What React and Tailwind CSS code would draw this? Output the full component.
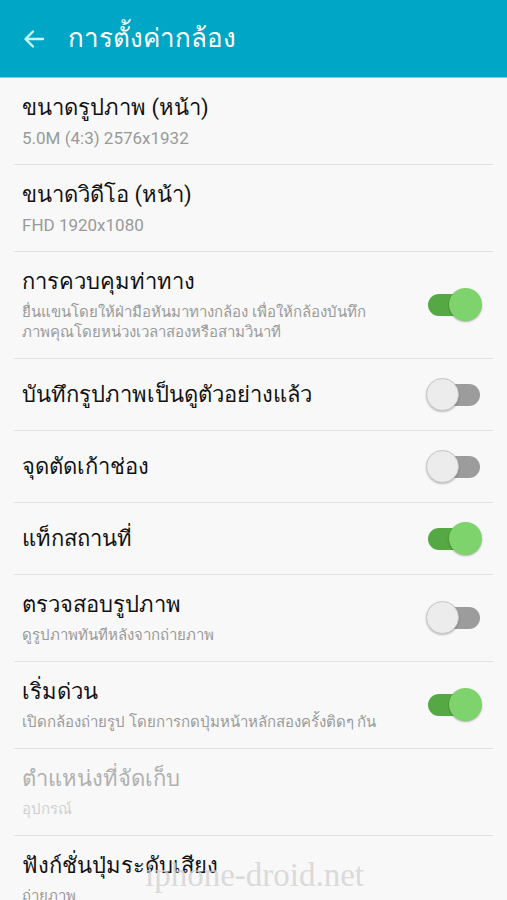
import React from 'react';

const rows = [
  { title: 'ขนาดรูปภาพ (หน้า)', sub: ['5.0M (4:3) 2576x1932'], latin: true },
  { title: 'ขนาดวิดีโอ (หน้า)', sub: ['FHD 1920x1080'], latin: true },
  {
    title: 'การควบคุมท่าทาง',
    sub: ['ยื่นแขนโดยให้ฝ่ามือหันมาทางกล้อง เพื่อให้กล้องบันทึก', 'ภาพคุณโดยหน่วงเวลาสองหรือสามวินาที'],
    toggle: true,
  },
  { title: 'บันทึกรูปภาพเป็นดูตัวอย่างแล้ว', toggle: false },
  { title: 'จุดตัดเก้าช่อง', toggle: false },
  { title: 'แท็กสถานที่', toggle: true },
  { title: 'ตรวจสอบรูปภาพ', sub: ['ดูรูปภาพทันทีหลังจากถ่ายภาพ'], toggle: false },
  { title: 'เริ่มด่วน', sub: ['เปิดกล้องถ่ายรูป โดยการกดปุ่มหน้าหลักสองครั้งติดๆ กัน'], toggle: true },
  { title: 'ตำแหน่งที่จัดเก็บ', sub: ['อุปกรณ์'], disabled: true },
  { title: 'ฟังก์ชั่นปุ่มระดับเสียง', sub: ['ถ่ายภาพ'] },
];

const Toggle = ({ on }) => (
  <div className="relative w-[56px] h-[34px] shrink-0">
    <div
      className={`absolute left-[2px] top-[6px] w-[52px] h-[22px] rounded-full ${on ? 'bg-[#56a845]' : 'bg-[#9c9c9c]'}`}
    ></div>
    {on ? (
      <div className="absolute right-0 top-0 w-[33px] h-[33px] rounded-full bg-[#7ed36c] shadow-[0_1px_2px_rgba(0,0,0,0.3)]"></div>
    ) : (
      <div className="absolute left-0 top-0 w-[33px] h-[33px] rounded-full bg-[#ececec] border border-[#c8c8c8] shadow-[0_1px_2px_rgba(0,0,0,0.25)]"></div>
    )}
  </div>
);

const App = () => {
  return (
    <div className="relative w-[507px] h-[900px] overflow-hidden bg-[#f8f8f8] font-['Roboto','Noto_Sans',sans-serif]">
      {/* Header */}
      <div className="h-[78px] bg-[#00a6c6] flex items-center border-b border-[#7fcfe0]">
        <svg className="ml-[22px]" width="24" height="24" viewBox="0 0 24 24" fill="none">
          <path d="M21 12H4M11 4.5L3.5 12L11 19.5" stroke="#c8f6f0" strokeWidth="2.4" strokeLinecap="round" strokeLinejoin="round" />
        </svg>
        <h1 className="ml-[22px] text-[26px] text-white leading-none pb-[2px]">การตั้งค่ากล้อง</h1>
      </div>

      {/* Settings list */}
      <div>
        {rows.map((row, i) => (
          <div key={i}>
            {i > 0 && <div className="mx-[14px] h-px bg-[#e2e2e2]"></div>}
            <div
              className={`flex items-center pl-[22px] pr-[25px] ${row.sub ? 'pt-[16px] pb-[16px]' : 'h-[71px]'}`}
            >
              <div className="flex-1 min-w-0">
                <div className={`text-[22px] leading-[28px] ${row.disabled ? 'text-[#b0b0b0]' : 'text-[#111111]'}`}>
                  {row.title}
                </div>
                {row.sub && (
                  <div
                    className={`mt-[6px] leading-[20px] ${row.latin ? 'text-[17px]' : 'text-[15px]'} ${row.disabled ? 'text-[#d0d0d0]' : 'text-[#9a9a9a]'}`}
                  >
                    {row.sub.map((line, j) => (
                      <div key={j}>{line}</div>
                    ))}
                  </div>
                )}
              </div>
              {row.toggle !== undefined && <Toggle on={row.toggle} />}
            </div>
          </div>
        ))}
      </div>

      {/* Watermark */}
      <div className="absolute left-[145px] top-[859px] text-[33px] leading-none text-[#d2d2d2]/80 font-['Liberation_Serif',serif] pointer-events-none">
        iphone-droid.net
      </div>
    </div>
  );
};

export default App;
